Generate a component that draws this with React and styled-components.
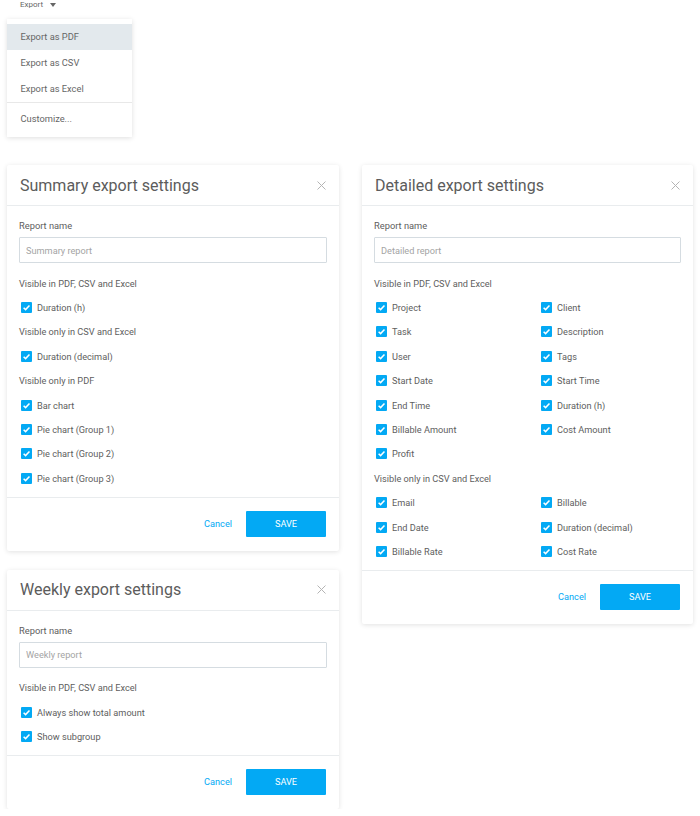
import React from "react";
import styled, { createGlobalStyle } from "styled-components";

const Global = createGlobalStyle`
  html, body { margin: 0; padding: 0; background: #fff; }
  body { font-family: Roboto, "Liberation Sans", Arial, sans-serif; color: #666; }
  * { box-sizing: border-box; }
`;

const Page = styled.div`
  width: 700px;
  padding: 0 7px;
`;

const ExportArea = styled.div`
  width: 125px;
`;

const Trigger = styled.div`
  height: 10px;
  line-height: 10px;
  padding-left: 13px;
  font-size: 8px;
  color: #666;
  display: flex;
  align-items: center;
  gap: 7px;
`;

const Caret = styled.span`
  width: 0;
  height: 0;
  border-left: 3.5px solid transparent;
  border-right: 3.5px solid transparent;
  border-top: 4px solid #666;
  margin-top: -1px;
`;

const Menu = styled.div`
  margin-top: 9px;
  background: #fff;
  box-shadow: 0 1px 5px rgba(0, 0, 0, 0.13);
  padding: 5px 0 5px;
`;

const MenuItem = styled.div`
  height: 26px;
  line-height: 26px;
  padding: 0 13.5px;
  font-size: 9.3px;
  color: #666;
  background: ${(p) => (p.$active ? "#e3e9ed" : "transparent")};
`;

const MenuDivider = styled.div`
  height: 1px;
  background: #e8e8e8;
  margin: 0 0 3px;
`;

const Grid = styled.div`
  margin-top: 28px;
  display: grid;
  grid-template-columns: 332px 331px;
  column-gap: 23px;
  align-items: start;
`;

const Column = styled.div`
  display: flex;
  flex-direction: column;
  gap: 19px;
`;

const Card = styled.div`
  background: #fff;
  border-radius: 2px;
  box-shadow: 0 1px 5px rgba(0, 0, 0, 0.12);
`;

const Header = styled.div`
  height: 41px;
  border-bottom: 1px solid #e9ecee;
  display: flex;
  align-items: center;
  justify-content: space-between;
  padding: 0 13px 0 13px;
`;

const Title = styled.h2`
  margin: 0;
  font-size: 16px;
  font-weight: 400;
  color: #5c5c5c;
`;

const Close = styled.svg`
  width: 9px;
  height: 9px;
  display: block;
`;

const Body = styled.div`
  padding: 14px 12px 6px;
`;

const FieldLabel = styled.div`
  font-size: 9.3px;
  line-height: 12px;
  color: #5e5e5e;
`;

const Input = styled.input`
  display: block;
  width: 100%;
  height: 26px;
  margin-top: 5px;
  border: 1px solid #d5dce1;
  border-radius: 1px;
  padding: 0 6px;
  font-family: inherit;
  font-size: 9.2px;
  color: #666;
  outline: none;
  &::placeholder { color: #a4a4a4; }
`;

const List = styled.div`
  margin-top: 8px;
  display: grid;
  grid-template-columns: ${(p) => (p.$two ? "165px 1fr" : "1fr")};
  grid-auto-rows: 24.4px;
`;

const Section = styled.div`
  grid-column: 1 / -1;
  display: flex;
  align-items: center;
  font-size: 9.2px;
  color: #5e5e5e;
`;

const Row = styled.label`
  display: flex;
  align-items: center;
  gap: 5px;
  padding-left: 2px;
  font-size: 9.2px;
  color: #5e5e5e;
`;

const Box = styled.span`
  width: 11px;
  height: 11px;
  border-radius: 1px;
  background: #03a9f4;
  display: flex;
  align-items: center;
  justify-content: center;
  flex: none;
`;

const Footer = styled.div`
  border-top: 1px solid #e9ecee;
  padding: 13px 13px 14px;
  display: flex;
  justify-content: flex-end;
  align-items: center;
  gap: 14px;
`;

const Cancel = styled.span`
  font-size: 9.2px;
  color: #03a9f4;
`;

const Save = styled.button`
  width: 80px;
  height: 26px;
  border: none;
  border-radius: 1px;
  background: #03a9f4;
  color: #fff;
  font-family: inherit;
  font-size: 9.2px;
  padding: 0;
`;

const Check = () => (
  <Box>
    <svg width="9" height="9" viewBox="0 0 10 10">
      <path d="M1.8 5.2 L4 7.3 L8.3 2.8" fill="none" stroke="#fff" strokeWidth="1.7" />
    </svg>
  </Box>
);

const Item = ({ children }) => (
  <Row>
    <Check />
    {children}
  </Row>
);

const Dialog = ({ title, placeholder, two, children }) => (
  <Card>
    <Header>
      <Title>{title}</Title>
      <Close viewBox="0 0 9 9">
        <path d="M0.5 0.5 L8.5 8.5 M8.5 0.5 L0.5 8.5" stroke="#b4b4b4" strokeWidth="1" />
      </Close>
    </Header>
    <Body>
      <FieldLabel>Report name</FieldLabel>
      <Input placeholder={placeholder} />
      <List $two={two}>{children}</List>
    </Body>
    <Footer>
      <Cancel>Cancel</Cancel>
      <Save>SAVE</Save>
    </Footer>
  </Card>
);

export default function App() {
  return (
    <>
      <Global />
      <Page>
        <ExportArea>
          <Trigger>
            Export <Caret />
          </Trigger>
          <Menu>
            <MenuItem $active>Export as PDF</MenuItem>
            <MenuItem>Export as CSV</MenuItem>
            <MenuItem>Export as Excel</MenuItem>
            <MenuDivider />
            <MenuItem>Customize...</MenuItem>
          </Menu>
        </ExportArea>
        <Grid>
          <Column>
            <Dialog title="Summary export settings" placeholder="Summary report">
              <Section>Visible in PDF, CSV and Excel</Section>
              <Item>Duration (h)</Item>
              <Section>Visible only in CSV and Excel</Section>
              <Item>Duration (decimal)</Item>
              <Section>Visible only in PDF</Section>
              <Item>Bar chart</Item>
              <Item>Pie chart (Group 1)</Item>
              <Item>Pie chart (Group 2)</Item>
              <Item>Pie chart (Group 3)</Item>
            </Dialog>
            <Dialog title="Weekly export settings" placeholder="Weekly report">
              <Section>Visible in PDF, CSV and Excel</Section>
              <Item>Always show total amount</Item>
              <Item>Show subgroup</Item>
            </Dialog>
          </Column>
          <Dialog title="Detailed export settings" placeholder="Detailed report" two>
            <Section>Visible in PDF, CSV and Excel</Section>
            <Item>Project</Item>
            <Item>Client</Item>
            <Item>Task</Item>
            <Item>Description</Item>
            <Item>User</Item>
            <Item>Tags</Item>
            <Item>Start Date</Item>
            <Item>Start Time</Item>
            <Item>End Time</Item>
            <Item>Duration (h)</Item>
            <Item>Billable Amount</Item>
            <Item>Cost Amount</Item>
            <Item>Profit</Item>
            <Section>Visible only in CSV and Excel</Section>
            <Item>Email</Item>
            <Item>Billable</Item>
            <Item>End Date</Item>
            <Item>Duration (decimal)</Item>
            <Item>Billable Rate</Item>
            <Item>Cost Rate</Item>
          </Dialog>
        </Grid>
      </Page>
    </>
  );
}
